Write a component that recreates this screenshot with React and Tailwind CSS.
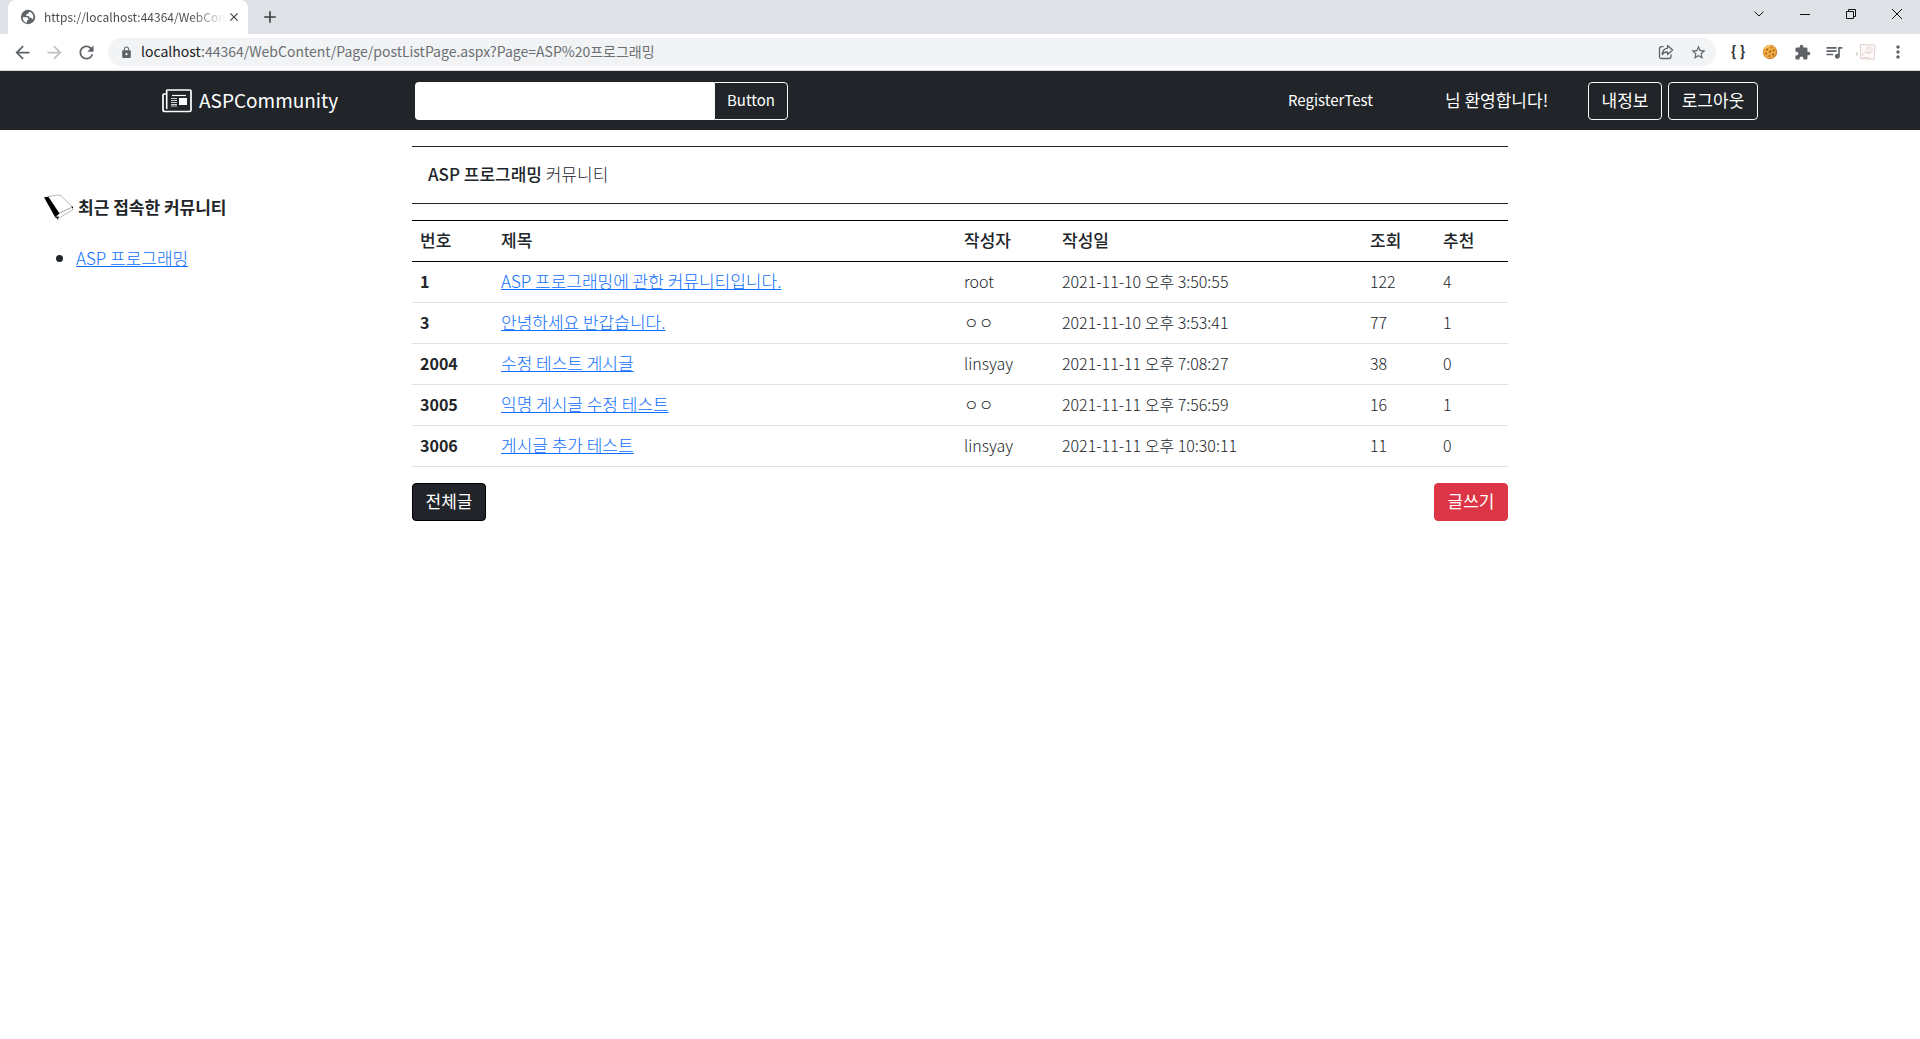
import React from "react";
import {
  MdAdd,
  MdArrowBack,
  MdArrowForward,
  MdClose,
  MdExtension,
  MdLock,
  MdMoreVert,
  MdQueueMusic,
  MdRefresh,
  MdStarBorder,
} from "react-icons/md";

const posts = [
  { id: 1, title: "ASP 프로그래밍에 관한 커뮤니티입니다.", author: "root", date: "2021-11-10 오후 3:50:55", views: 122, likes: 4 },
  { id: 3, title: "안녕하세요 반갑습니다.", author: "ㅇㅇ", date: "2021-11-10 오후 3:53:41", views: 77, likes: 1 },
  { id: 2004, title: "수정 테스트 게시글", author: "linsyay", date: "2021-11-11 오후 7:08:27", views: 38, likes: 0 },
  { id: 3005, title: "익명 게시글 수정 테스트", author: "ㅇㅇ", date: "2021-11-11 오후 7:56:59", views: 16, likes: 1 },
  { id: 3006, title: "게시글 추가 테스트", author: "linsyay", date: "2021-11-11 오후 10:30:11", views: 11, likes: 0 },
];

function IconButton({ label, className = "", children }) {
  return (
    <button type="button" aria-label={label} className={`flex h-7 w-8 items-center justify-center text-[#5f6368] ${className}`}>
      {children}
    </button>
  );
}

function WindowButton({ label, children }) {
  return (
    <button type="button" aria-label={label} className="flex h-7 w-[46px] items-center justify-center">
      <svg width="12" height="12" viewBox="0 0 12 12" fill="none" stroke="#111" strokeWidth="1">
        {children}
      </svg>
    </button>
  );
}

function GlobeIcon() {
  return (
    <svg width="16" height="16" viewBox="0 0 16 16" className="shrink-0">
      <circle cx="8" cy="8" r="7.2" fill="#5f6368" />
      <path d="M2.600 8.300h4c1.300 0 1.700.8 1.700 1.500v1.400H7v2.600C4.500 13.400 2.500 11.200 2.600 8.300z" fill="#fff" />
      <path d="M9.800 2.700c2 .7 3.500 2.700 3.600 5-.1 1.100-.4 2-.9 2.800-.4-1-1-1.700-2-1.700-1 0-1.100-.9-1.100-1.400C8.700 6.800 6.300 7.200 6 6.200c0-1.300 1.300-1.100 1.900-1.500.8-.4.6-1.600 1.900-2z" fill="#fff" />
    </svg>
  );
}

function ShareIcon() {
  return (
    <svg width="16" height="16" viewBox="0 0 16 16" fill="none" stroke="#5f6368" strokeWidth="1.3" strokeLinejoin="round">
      <path d="M5.5 2.7H3.2A1.7 1.7 0 0 0 1.5 4.4v8.4a1.7 1.7 0 0 0 1.7 1.7h8.1a1.7 1.7 0 0 0 1.7-1.7v-2.3" />
      <path d="M9.600 1.500l5 4.500-5 4.500V8C7 8 5.200 8.800 4.200 10.600 4.500 7.200 6.200 4.500 9.600 4.100z" />
    </svg>
  );
}

function CookieIcon() {
  return (
    <svg width="16" height="16" viewBox="0 0 16 16">
      <circle cx="8" cy="8" r="7.2" fill="#c9772b" />
      <circle cx="7.7" cy="7.6" r="6.6" fill="#f0a93f" />
      <path d="M3 4.500A6 6 0 0 1 8 2" stroke="#fbd27f" strokeWidth="1.5" fill="none" />
      <g fill="#7a4318">
        <circle cx="5" cy="5.4" r=".8" />
        <circle cx="9" cy="3.6" r=".7" />
        <circle cx="8.3" cy="7.6" r=".9" />
        <circle cx="11.9" cy="6.4" r=".8" />
        <circle cx="4.2" cy="9.5" r=".8" />
        <circle cx="7.4" cy="12" r=".8" />
        <circle cx="11.2" cy="10.6" r=".9" />
      </g>
    </svg>
  );
}

function SketchIcon() {
  return (
    <svg width="20" height="18" viewBox="0 0 20 18" fill="none" stroke="#dcc4c2" strokeWidth=".8">
      <path d="M4.500 1.500l14.500.5-1 14.500-13.500-1z" fill="#fdf9f8" />
      <path d="M6 13c1-3 3-4 5-3s3 1 4-1M10 6c1-2 4-3 5.500-1s0 4-2 4-4-1-3.500-3zM6.500 14.500l8 .5M12 5l2 2" />
      <path d="M1 9.500v3" stroke="#9a9a9a" />
    </svg>
  );
}

function BrowserChrome() {
  return (
    <div>
      <div className="flex h-[34px] bg-[#dee1e6] pl-2">
        <div className="flex w-60 items-center rounded-t-lg bg-white pr-1.5 pl-3">
          <GlobeIcon />
          <span className="ml-2 flex-1 bg-linear-to-r from-[#45494d] from-80% to-white bg-clip-text text-[12px] leading-5 whitespace-nowrap text-transparent">
            https://localhost:44364/WebCon
          </span>
          <button type="button" aria-label="탭 닫기" className="flex w-5 justify-center text-[#3c4043]">
            <MdClose size={14} />
          </button>
        </div>
        <button type="button" aria-label="새 탭" className="flex w-11 items-center justify-center text-[#3c4043]">
          <MdAdd size={20} />
        </button>
        <div className="ml-auto flex">
          <WindowButton label="탭 검색"><path d="M1.500 3.500L6 8l4.500-4.500" /></WindowButton>
          <WindowButton label="최소화"><path d="M1 6.500h10" /></WindowButton>
          <WindowButton label="이전 크기로 복원"><path d="M1.500 3.500h7v7h-7zM3.500 3.500v-2h7v7h-2" /></WindowButton>
          <WindowButton label="닫기"><path d="M1 1l10 10M11 1L1 11" /></WindowButton>
        </div>
      </div>
      <div className="flex h-[37px] items-center border-b border-[#d5d8dc] bg-white px-1.5">
        <IconButton label="뒤로"><MdArrowBack size={21} /></IconButton>
        <IconButton label="앞으로"><MdArrowForward size={21} className="opacity-40" /></IconButton>
        <IconButton label="새로고침"><MdRefresh size={21} /></IconButton>
        <div className="mx-1.5 flex h-7 flex-1 items-center rounded-full bg-[#f1f3f4] pr-0.5 pl-3">
          <MdLock size={13} className="text-[#5f6368]" />
          <span className="ml-2 flex-1 pb-0.5 text-[14px] leading-5 text-[#6b6f73]">
            <span className="text-[#202124]">localhost</span>:44364/WebContent/Page/postListPage.aspx?Page=ASP%20프로그래밍
          </span>
          <IconButton label="공유"><ShareIcon /></IconButton>
          <IconButton label="북마크"><MdStarBorder size={17} /></IconButton>
        </div>
        <IconButton label="JSON" className="pb-0.5 text-[15px] font-bold text-[#333]">{"{ }"}</IconButton>
        <IconButton label="쿠키"><CookieIcon /></IconButton>
        <IconButton label="확장 프로그램"><MdExtension size={17} /></IconButton>
        <IconButton label="미디어"><MdQueueMusic size={20} /></IconButton>
        <IconButton label="프로필"><SketchIcon /></IconButton>
        <IconButton label="메뉴"><MdMoreVert size={20} /></IconButton>
      </div>
    </div>
  );
}

function NewspaperIcon() {
  return (
    <svg width="30" height="24" viewBox="0 0 30 24" fill="none" stroke="#fff">
      <path d="M4.500 2a1 1 0 0 1 1-1h22.500a1 1 0 0 1 1 1v19a1.500 1.500 0 0 1-1.500 1.500H3a2 2 0 0 1-2-2V6a1 1 0 0 1 1-1h2" strokeWidth="1.7" />
      <path d="M4.700 2v18" strokeWidth="1.6" />
      <path d="M10 6.500h14" strokeWidth="1.2" />
      <path d="M9 9.500h6M9 11.500h6M9 13.500h6M9 15.500h6M9 17h6" strokeWidth=".8" />
      <path d="M17 9h8v7h-8z" fill="#fff" stroke="none" />
    </svg>
  );
}

function BookIcon() {
  return (
    <svg width="31" height="28" viewBox="0 0 31 28">
      <path d="M5 2.700L14 1l4 .7L29.500 13v3L16 24l-3-1 3-3.700z" fill="#fff" stroke="#888" strokeWidth=".6" />
      <path d="M1 3.300L5.300 2.700 16.500 19.500 12 23z" fill="#000" />
      <path d="M16 19.300L29.500 13" fill="none" stroke="#666" strokeWidth=".6" />
      <path d="M29 12.500l.8 1.500M12 23l4 .2M13.500 23l1.500 2.500" fill="none" stroke="#000" strokeWidth="1" />
    </svg>
  );
}

function SiteHeader() {
  return (
    <header className="bg-[#212529] text-white">
      <div className="mx-auto flex h-[59px] w-5/6 items-center px-0.5">
        <a href="#" className="flex w-[253px] items-center gap-[7px] text-[19px] leading-7">
          <NewspaperIcon />
          <span className="pb-0.5">ASPCommunity</span>
        </a>
        <form className="flex h-[38px]">
          <input aria-label="검색" type="text" className="w-[299px] rounded-l bg-white px-3 text-[#212529]" />
          <button type="button" className="w-[74px] rounded-r border border-[#f8f9fa] pb-0.5 text-center text-[15px]">Button</button>
        </form>
        <div className="ml-auto flex items-center">
          <span className="w-[157px] pb-0.5 text-[15px]">RegisterTest</span>
          <span className="w-[143px] pb-0.5 text-[17px]">님 환영합니다!</span>
          <button type="button" className="mr-1.5 h-[38px] w-[74px] rounded border border-[#f8f9fa] pb-0.5 text-[17px]">내정보</button>
          <button type="button" className="h-[38px] w-[90px] rounded border border-[#f8f9fa] pb-0.5 text-[17px]">로그아웃</button>
        </div>
      </div>
    </header>
  );
}

export default function App() {
  return (
    <div className="min-h-screen bg-white font-['Noto_Sans_CJK_KR',sans-serif] text-[16px] leading-6 text-[#212529]">
      <BrowserChrome />
      <SiteHeader />
      <div className="grid grid-cols-[5fr_14fr_5fr]">
        <aside className="pt-16 pr-4 pl-[43px]">
          <h2 className="flex items-center gap-1 text-[17px] font-bold">
            <BookIcon />
            <span className="pb-0.5">최근 접속한 커뮤니티</span>
          </h2>
          <ul className="mt-6 list-disc pl-[33px] text-[17px]">
            <li><a href="#" className="font-light text-[#0d6efd] underline">ASP 프로그래밍</a></li>
          </ul>
        </aside>
        <main className="px-3 pt-4">
          <div className="border-y border-[#212529] px-4 pt-[15px] pb-[17px]">
            <h1 className="text-[17px] font-light"><b className="font-medium">ASP 프로그래밍</b> 커뮤니티</h1>
          </div>
          <table className="mt-4 w-full table-fixed border-collapse text-left">
            <colgroup>
              <col className="w-[81px]" />
              <col />
              <col className="w-[98px]" />
              <col className="w-[308px]" />
              <col className="w-[73px]" />
              <col className="w-[73px]" />
            </colgroup>
            <thead>
              <tr className="h-[41px] border-y border-black">
                {["번호", "제목", "작성자", "작성일", "조회", "추천"].map((name) => (
                  <th key={name} scope="col" className="px-2 pb-0.5 text-[17px] font-medium">{name}</th>
                ))}
              </tr>
            </thead>
            <tbody>
              {posts.map((post) => (
                <tr key={post.id} className="h-[41px] border-b border-[#dee2e6] font-light">
                  <th scope="row" className="px-2 pb-0.5 font-bold">{post.id}</th>
                  <td className="px-2 pb-0.5 text-[17px]"><a href="#" className="text-[#0d6efd] underline">{post.title}</a></td>
                  <td className="px-2 pb-0.5">{post.author}</td>
                  <td className="px-2 pb-0.5">{post.date}</td>
                  <td className="px-2 pb-0.5">{post.views}</td>
                  <td className="px-2 pb-0.5">{post.likes}</td>
                </tr>
              ))}
            </tbody>
          </table>
          <div className="mt-4 flex justify-between text-[17px] text-white">
            <button type="button" className="h-[38px] w-[74px] rounded border border-black bg-[#212529] pb-0.5">전체글</button>
            <button type="button" className="h-[38px] w-[74px] rounded border border-[#dc3545] bg-[#dc3545] pb-0.5">글쓰기</button>
          </div>
        </main>
      </div>
    </div>
  );
}
